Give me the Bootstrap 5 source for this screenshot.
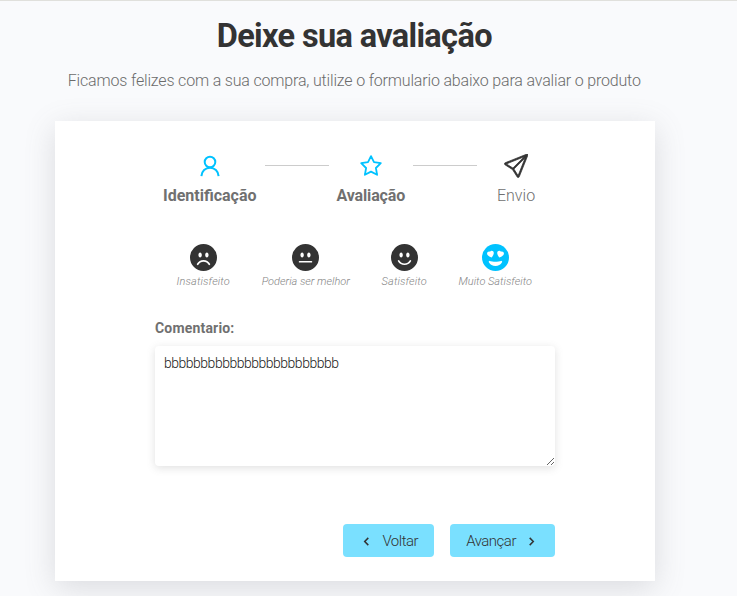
<!DOCTYPE html>
<html lang="pt-BR">
<head>
<meta charset="utf-8">
<meta name="viewport" content="width=device-width, initial-scale=1">
<title>Deixe sua avaliação</title>
<link rel="stylesheet" href="https://cdn.jsdelivr.net/npm/bootstrap@5.3.0/dist/css/bootstrap.min.css">
<style>
body{font-family:"Roboto Light",Roboto,sans-serif;background:#f9fafc;color:#707070;border-top:1px solid #e0e0dc;height:596px;overflow:hidden}
.page{width:600px;margin-left:55px}
.page header{padding-right:1.5px}
.title{font-family:Roboto,sans-serif;font-size:32.5px;font-weight:700;line-height:40px;letter-spacing:-.65px;color:#333;margin:15px 0 0}
.subtitle{font-size:16px;line-height:24px;letter-spacing:-.174px;margin:13px 0 28px;font-weight:400;color:#6b6b6b}
.panel{height:460px;padding:33px 100px 24px;box-shadow:0 7px 29px 0 rgba(100,100,111,.2)}
.steps{gap:8px}
.step{min-width:62px;font-size:16px;line-height:20px}
.step svg{height:24px;width:24px;margin-bottom:8px}
.step-done{font-family:Roboto,sans-serif;font-weight:700}
.step-done svg{color:#00c2ff}
.step-next svg{color:#333}
.step-two{letter-spacing:-.15px}
.step-line{width:64px;height:1px;background:#ccc;margin-top:11px}
.ratings{gap:31.7px;margin-top:38px;padding-right:1.5px;color:#333}
.rating{font-size:11px;line-height:14px;cursor:pointer}
.rating svg{width:27px;height:27px;margin-bottom:4px}
.rating span{font-style:italic;color:#858585}
.rating:nth-child(odd) span{letter-spacing:.14px}
.rating.chosen{color:#00c2ff}
.comment-label{font-family:Roboto,sans-serif;font-size:14px;font-weight:700;letter-spacing:.18px;line-height:20px;margin:29px 0 8px}
.comment{height:120px;font-size:14px;line-height:17px;letter-spacing:-.488px;color:#222;border-radius:4px;padding:9px;box-shadow:0 2px 8px rgba(99,99,99,.2);resize:both}
.actions{gap:16px;margin-top:58px}
.btn-step{background:#7ae0ff;color:#333;border-radius:4px;height:33px;padding:1px 16px 0;gap:8px;font-size:15px;border:0}
.btn-step:hover{background:#5cd6fb}
.btn-step svg{width:15px;height:15px}
.btn-step span{letter-spacing:-.48px}
</style>
</head>
<body>
<main class="page">
  <header class="text-center text-nowrap">
    <h1 class="title">Deixe sua avaliação</h1>
    <p class="subtitle">Ficamos felizes com a sua compra, utilize o formulario abaixo para avaliar o produto</p>
  </header>
  <form class="panel bg-white">
    <div class="steps d-flex justify-content-center align-items-start text-nowrap">
      <div class="step step-done d-flex flex-column align-items-center">
        <svg viewBox="0 0 24 24" fill="none" stroke="currentColor" stroke-width="2"><circle cx="12" cy="8" r="5.3"/><path d="M3.4 22.1C3.7 17 7.4 13.7 12 13.7S20.3 17 20.6 22.1"/></svg>
        <span>Identificação</span>
      </div>
      <div class="step-line"></div>
      <div class="step step-done step-two d-flex flex-column align-items-center">
        <svg viewBox="0 0 24 24" fill="none" stroke="currentColor" stroke-width="1.8" stroke-linejoin="round"><path d="M12 2.1 15 8.2 21.8 9.2 16.9 14 18.1 20.8 12 17.6 5.9 20.8 7.1 14 2.2 9.2 9 8.2Z"/></svg>
        <span>Avaliação</span>
      </div>
      <div class="step-line"></div>
      <div class="step step-next d-flex flex-column align-items-center">
        <svg viewBox="0 0 16 16" fill="currentColor" stroke="currentColor" stroke-width=".5"><path d="M15.854.146a.5.5 0 0 1 .11.54l-5.819 14.547a.75.75 0 0 1-1.329.124l-3.178-4.995L.643 7.184a.75.75 0 0 1 .124-1.33L15.314.037a.5.5 0 0 1 .54.11ZM6.636 10.07l2.761 4.338L14.13 2.576zm6.787-8.201L1.591 6.602l4.339 2.76z"/></svg>
        <span>Envio</span>
      </div>
    </div>

    <div class="ratings d-flex justify-content-center text-nowrap">
      <div class="rating d-flex flex-column align-items-center">
        <svg viewBox="0 0 16 16" fill="currentColor"><path d="M8 16A8 8 0 1 0 8 0a8 8 0 0 0 0 16M7 6.5C7 7.328 6.552 8 6 8s-1-.672-1-1.5S5.448 5 6 5s1 .672 1 1.5m-2.715 5.933a.5.5 0 0 1-.183-.683A4.5 4.5 0 0 1 8 9.5a4.5 4.5 0 0 1 3.898 2.25.5.5 0 0 1-.866.5A3.5 3.5 0 0 0 8 10.5a3.5 3.5 0 0 0-3.032 1.75.5.5 0 0 1-.683.183M10 8c-.552 0-1-.672-1-1.5S9.448 5 10 5s1 .672 1 1.5S10.552 8 10 8"/></svg>
        <span>Insatisfeito</span>
      </div>
      <div class="rating d-flex flex-column align-items-center">
        <svg viewBox="0 0 16 16" fill="currentColor"><path d="M8 16A8 8 0 1 0 8 0a8 8 0 0 0 0 16M7 6.5C7 7.328 6.552 8 6 8s-1-.672-1-1.5S5.448 5 6 5s1 .672 1 1.5m-3 4a.5.5 0 0 1 .5-.5h7a.5.5 0 0 1 0 1h-7a.5.5 0 0 1-.5-.5M10 8c-.552 0-1-.672-1-1.5S9.448 5 10 5s1 .672 1 1.5S10.552 8 10 8"/></svg>
        <span>Poderia ser melhor</span>
      </div>
      <div class="rating d-flex flex-column align-items-center">
        <svg viewBox="0 0 16 16" fill="currentColor"><path d="M8 16A8 8 0 1 0 8 0a8 8 0 0 0 0 16M7 6.5C7 7.328 6.552 8 6 8s-1-.672-1-1.5S5.448 5 6 5s1 .672 1 1.5M4.285 9.567a.5.5 0 0 1 .683.183A3.5 3.5 0 0 0 8 11.5a3.5 3.5 0 0 0 3.032-1.75.5.5 0 1 1 .866.5A4.5 4.5 0 0 1 8 12.5a4.5 4.5 0 0 1-3.898-2.25.5.5 0 0 1 .183-.683M10 8c-.552 0-1-.672-1-1.5S9.448 5 10 5s1 .672 1 1.5S10.552 8 10 8"/></svg>
        <span>Satisfeito</span>
      </div>
      <div class="rating chosen d-flex flex-column align-items-center">
        <svg viewBox="0 0 16 16"><circle cx="8" cy="8" r="8" fill="currentColor"/><path fill="#fff" d="M4.756 4.566c.763-1.424 4.02-.12.952 3.434-4.496-1.596-2.35-4.298-.952-3.434M11.244 4.566c1.397-.864 3.543 1.838-.953 3.434-3.067-3.554.19-4.858.953-3.434M11.315 10.014a.5.5 0 0 1 .548.736A4.5 4.5 0 0 1 7.965 13a4.5 4.5 0 0 1-3.898-2.25.5.5 0 0 1 .548-.736C5.2 10.14 6.9 10.5 7.965 10.5s2.765-.36 3.35-.486"/></svg>
        <span>Muito Satisfeito</span>
      </div>
    </div>

    <label class="comment-label d-block" for="comentario">Comentario:</label>
    <textarea id="comentario" class="comment form-control border-0" spellcheck="false">bbbbbbbbbbbbbbbbbbbbbbbb</textarea>

    <div class="actions d-flex justify-content-end">
      <button type="button" class="btn btn-step d-flex align-items-center">
        <svg viewBox="0 0 15 15" fill="none" stroke="currentColor" stroke-width="1.5"><path d="M9.3 3.9 5.7 7.5l3.6 3.6"/></svg>
        <span>Voltar</span>
      </button>
      <button type="button" class="btn btn-step d-flex align-items-center">
        <span>Avançar</span>
        <svg viewBox="0 0 15 15" fill="none" stroke="currentColor" stroke-width="1.5"><path d="m5.7 3.9 3.6 3.6-3.6 3.6"/></svg>
      </button>
    </div>
  </form>
</main>
<script src="https://cdn.jsdelivr.net/npm/bootstrap@5.3.0/dist/js/bootstrap.bundle.min.js"></script>
</body>
</html>
